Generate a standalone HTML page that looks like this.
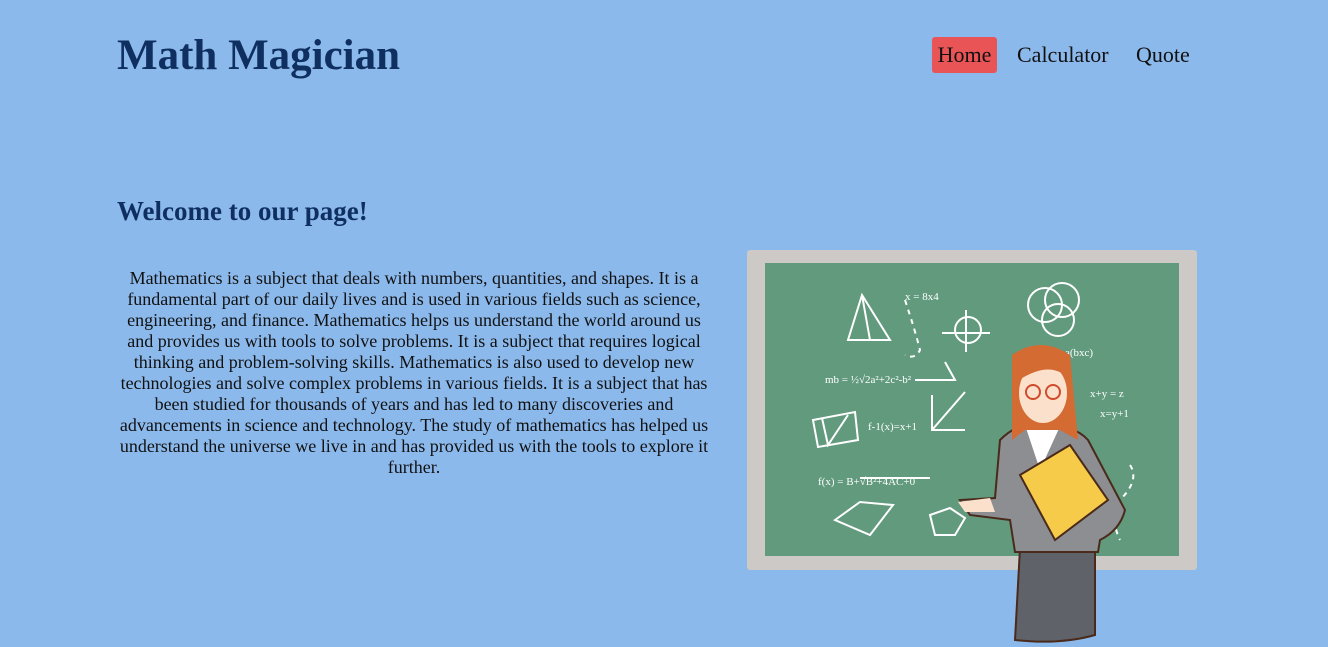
<!DOCTYPE html>
<html><head><style>
body{margin:0;width:1328px;height:647px;background:#8cb9ec;font-family:"Liberation Serif",serif;position:relative;overflow:hidden}
h1{position:absolute;left:117px;top:31px;margin:0;font-size:43px;color:#0e2f5f;font-weight:bold}
nav{position:absolute;left:932px;top:37px;font-size:22px;color:#111}
nav span{position:absolute;top:0;height:36px;line-height:36px;white-space:nowrap}
h2{position:absolute;left:117px;top:196px;margin:0;font-size:27px;color:#0e2f5f}
p{position:absolute;left:114px;width:600px;top:268px;margin:0;font-size:18px;line-height:21px;text-align:center;color:#111}
</style></head><body>
<h1>Math Magician</h1>
<nav><span style="left:0;width:65px;background:#e95556;border-radius:3px;text-align:center">Home</span><span style="left:85px">Calculator</span><span style="left:204px">Quote</span></nav>
<h2>Welcome to our page!</h2>
<p>Mathematics is a subject that deals with numbers, quantities, and shapes. It is a fundamental part of our daily lives and is used in various fields such as science, engineering, and finance. Mathematics helps us understand the world around us and provides us with tools to solve problems. It is a subject that requires logical thinking and problem-solving skills. Mathematics is also used to develop new technologies and solve complex problems in various fields. It is a subject that has been studied for thousands of years and has led to many discoveries and advancements in science and technology. The study of mathematics has helped us understand the universe we live in and has provided us with the tools to explore it further.</p>
<svg style="position:absolute;left:0;top:0" width="1328" height="647">
<rect x="747" y="250" width="450" height="320" rx="3" fill="#cdc9c6"/>
<rect x="765" y="263" width="414" height="293" fill="#629a7e"/>
<g stroke="#fff" stroke-width="2" fill="none">
<path d="M862 295 L848 340 L890 340 Z M862 295 L870 340"/>
<path d="M813 420 L855 412 L858 440 L818 447 Z M822 418 L828 445 L848 415"/>
<circle cx="1045" cy="305" r="17"/><circle cx="1062" cy="300" r="17"/><circle cx="1058" cy="320" r="16"/>
<circle cx="968" cy="330" r="13"/><path d="M942 333 H990 M966 310 V352"/>
<path d="M915 380 L955 380 L945 362"/>
<path d="M932 395 V430 H965 M932 430 L965 392"/>
<path d="M835 520 L860 502 L893 505 L870 535 Z M835 520 L870 535"/>
<path d="M930 515 L950 508 L965 518 L955 535 L935 535 Z"/>
<path d="M860 478 H930"/>
<path d="M905 300 Q915 330 920 350 Q915 360 905 355" stroke-dasharray="5 5"/>
<path d="M1130 465 Q1140 480 1120 500 Q1110 520 1120 540" stroke-dasharray="5 5"/>
</g>
<g font-family="Liberation Serif" font-size="11" fill="#fff">
<text x="905" y="300">x = 8x4</text><text x="825" y="383">mb = ½√2a²+2c²-b²</text>
<text x="868" y="430">f-1(x)=x+1</text><text x="818" y="485">f(x) = B+√B²+4AC+0</text>
<text x="1090" y="397">x+y = z</text><text x="1100" y="417">x=y+1</text><text x="1065" y="356">a(bxc)</text>
</g>
<path d="M1015 640 L1020 548 L1095 548 L1095 635 Q1060 645 1015 640 Z" fill="#5f6269" stroke="#4a2a1a" stroke-width="2"/>
<path d="M1000 440 Q1020 420 1043 425 Q1075 425 1088 440 L1125 510 Q1120 530 1100 540 L1098 552 L1015 552 L1010 520 L970 515 L960 500 L995 498 Z" fill="#8d8e92" stroke="#4a2a1a" stroke-width="2"/>
<path d="M1025 425 L1040 470 L1062 422 Z" fill="#fff"/>
<path d="M1012 355 Q1040 335 1070 355 L1078 440 L1060 430 L1025 430 L1012 440 Z" fill="#d46b33"/>
<ellipse cx="1043" cy="393" rx="24" ry="30" fill="#fbe0cc"/>
<path d="M1019 380 Q1040 345 1068 378 Q1050 360 1019 380 Z" fill="#d46b33"/>
<g fill="none" stroke="#d04b2c" stroke-width="2"><circle cx="1033" cy="392" r="7"/><circle cx="1053" cy="392" r="7"/></g>
<path d="M1020 475 L1070 445 L1108 500 L1055 540 Z" fill="#f6cb4a" stroke="#4a2a1a" stroke-width="2"/>
<path d="M958 502 L990 498 L995 512 L965 512 Z" fill="#fbe0cc"/>
</svg>
</body></html>
